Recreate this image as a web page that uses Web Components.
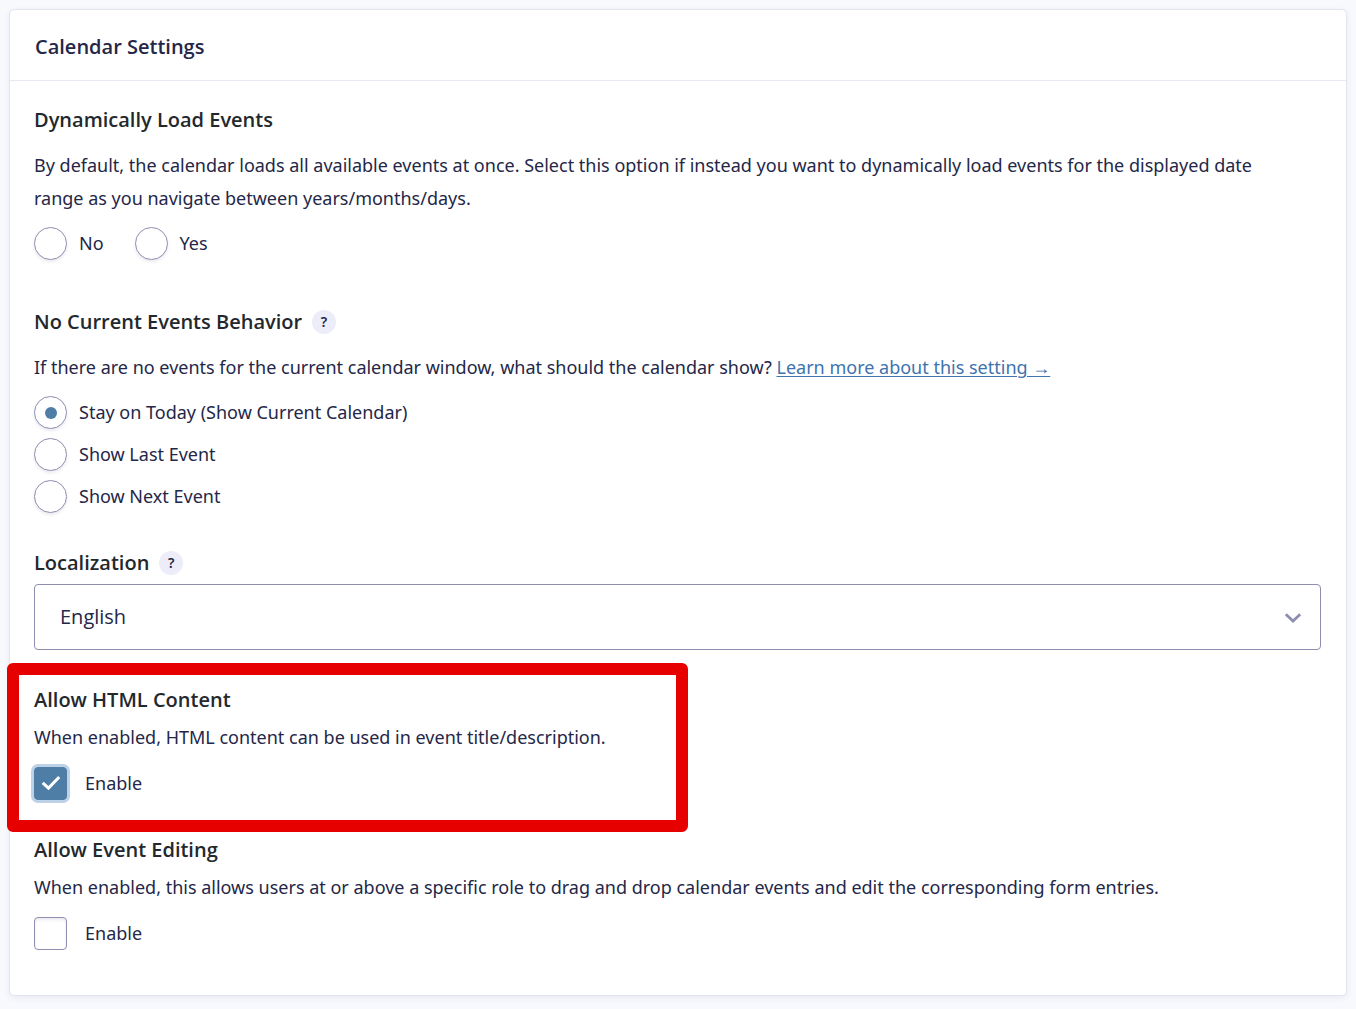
<!DOCTYPE html>
<html lang="en">
<head>
<meta charset="utf-8">
<title>Calendar Settings</title>
<style>
  body {
    margin: 0;
    padding: 9px;
    background: #f8f9fd;
    color: #242748;
    font: 400 18px/33px "Segoe UI", "Noto Sans", "Open Sans", sans-serif;
    --heading-font: "Segoe UI", "Open Sans", "Noto Sans", sans-serif;
    --heading: #23282d;
    --outline: #8e8eb0;
    --accent: #4e7da5;
    --link: #3e73ae;
    --callout: #e60000;
  }
</style>
</head>
<body>
<settings-card>
  <span slot="title">Calendar Settings</span>

  <setting-block class="roomy spaced">
    <span slot="heading">Dynamically Load Events</span>
    <span slot="description">By default, the calendar loads all available events at once. Select this option if instead you want to dynamically load events for the displayed date range as you navigate between years/months/days.</span>
    <choice-group type="radio" name="dynamic" label="Dynamically Load Events" options="No|Yes" inline></choice-group>
  </setting-block>

  <setting-block class="roomy">
    <span slot="heading">No Current Events Behavior</span>
    <help-tip slot="help"></help-tip>
    <span slot="description">If there are no events for the current calendar window, what should the calendar show? <text-link href="#learn">Learn more about this setting →</text-link></span>
    <choice-group type="radio" name="behavior" label="No Current Events Behavior" options="Stay on Today (Show Current Calendar)|Show Last Event|Show Next Event" value="Stay on Today (Show Current Calendar)"></choice-group>
  </setting-block>

  <select-field label="Localization" options="English"></select-field>

  <setting-block callout>
    <span slot="heading">Allow HTML Content</span>
    <span slot="description">When enabled, HTML content can be used in event title/description.</span>
    <choice-group type="checkbox" name="html" label="Allow HTML Content" options="Enable" value="Enable" focused></choice-group>
  </setting-block>

  <setting-block>
    <span slot="heading">Allow Event Editing</span>
    <span slot="description">When enabled, this allows users at or above a specific role to drag and drop calendar events and edit the corresponding form entries.</span>
    <choice-group type="checkbox" name="editing" label="Allow Event Editing" options="Enable"></choice-group>
  </setting-block>
</settings-card>

<script>
const define = (name, html, setup) => {
  const template = document.createElement('template');
  template.innerHTML = html;
  customElements.define(name, class extends HTMLElement {
    constructor() {
      super();
      this.attachShadow({ mode: 'open' }).append(template.content.cloneNode(true));
    }
    connectedCallback() {
      if (setup && !this.ready) { this.ready = true; setup(this, this.shadowRoot); }
    }
  });
};

define('settings-card', `
  <style>
    :host { display: block; background: #fff; border: 1px solid #e2e4ee; border-radius: 5px; box-shadow: 0 2px 6px rgba(58, 58, 120, .07); }
    header { padding: 22px 25px 18px; border-bottom: 1px solid #e8e8f0; }
    h2 { margin: 0; font: 600 20px/30px var(--heading-font); }
    .body { display: flex; flex-direction: column; padding: 24px 25px 45px 24px; }
    ::slotted(*) { margin-bottom: 35px; }
    ::slotted(.spaced) { margin-bottom: 47px; }
    ::slotted(:last-child) { margin-bottom: 0; }
  </style>
  <header><h2><slot name="title"></slot></h2></header>
  <div class="body"><slot></slot></div>
`);

define('setting-block', `
  <style>
    :host { display: block; position: relative; }
    .head { display: flex; align-items: center; gap: 10px; margin-bottom: 6px; }
    :host(.roomy) .head { margin-bottom: 14px; }
    h3 { margin: 0; color: var(--heading); font: 600 20px/30px var(--heading-font); }
    p { margin: 0 0 13px; padding-right: 32px; }
    :host(.roomy) p { margin-bottom: 12px; }
    .frame { display: none; }
    :host([callout]) .frame { display: block; position: absolute; inset: -22px auto -32px -27px; width: 681px; box-sizing: border-box; border: 12px solid var(--callout); border-radius: 6px; pointer-events: none; }
  </style>
  <div class="head"><h3><slot name="heading"></slot></h3><slot name="help"></slot></div>
  <p><slot name="description"></slot></p>
  <slot></slot>
  <div class="frame"></div>
`);

define('help-tip', `
  <style>
    :host { display: inline-flex; }
    button { width: 24px; height: 24px; padding: 0; border: 0; border-radius: 50%; background: #ecedf8; color: #242748; font: inherit; font-size: 14px; font-weight: 600; line-height: 24px; }
  </style>
  <button type="button" aria-label="Help">?</button>
`);

define('text-link', `
  <style>
    :host { display: inline; }
    a { color: var(--link); text-decoration: underline; text-decoration-thickness: 1px; text-underline-offset: 2px; }
  </style>
  <a><slot></slot></a>
`, (host, root) => { root.querySelector('a').href = host.getAttribute('href'); });

define('choice-group', `
  <style>
    :host { display: block; }
    .group { display: flex; flex-direction: column; align-items: flex-start; gap: 9px; }
    :host([inline]) .group { flex-direction: row; gap: 31px; }
    .choice { display: flex; align-items: center; gap: 12px; }
    input { appearance: none; display: grid; place-items: center; box-sizing: border-box; flex: none; width: 33px; height: 33px; margin: 0; border: 1px solid var(--outline); background: #fff; outline: 0; }
    input[type=radio] { border-radius: 50%; box-shadow: 0 2px 3px rgba(58, 58, 120, .1); }
    input[type=radio]:checked::before { content: ""; width: 12px; height: 12px; border-radius: 50%; background: var(--accent); }
    input[type=checkbox] { border-radius: 4px; box-shadow: inset 0 2px 3px rgba(58, 58, 120, .1); }
    .mark { display: none; }
    :host([type=checkbox]) .choice { gap: 18px; }
    .box { display: grid; }
    .box > * { grid-area: 1 / 1; }
    input[type=checkbox]:checked { background: var(--accent); border-color: var(--accent); }
    input[type=checkbox]:checked + .mark { display: block; pointer-events: none; }
    :host([focused]) input[type=checkbox] { box-shadow: 0 0 0 3px #bdd2e6; }
  </style>
  <div class="group"></div>
`, (host, root) => {
  const group = root.querySelector('.group');
  const type = host.getAttribute('type');
  group.setAttribute('role', type === 'radio' ? 'radiogroup' : 'group');
  group.setAttribute('aria-label', host.getAttribute('label'));
  host.getAttribute('options').split('|').forEach((text, i) => {
    const row = document.createElement('div');
    row.className = 'choice';
    row.innerHTML = `<span class="box"><input type="${type}" id="c${i}" name="${host.getAttribute('name')}">
      <svg class="mark" width="33" height="33" viewBox="0 0 33 33" fill="none" aria-hidden="true"><path d="M8.7 15.8l5.8 5.3L25.2 10" stroke="#fff" stroke-width="3"/></svg></span>
      <label for="c${i}"></label>`;
    row.querySelector('label').textContent = text;
    row.querySelector('input').checked = text === host.getAttribute('value');
    group.append(row);
  });
});

define('select-field', `
  <style>
    :host { display: block; }
    .head { display: flex; align-items: center; gap: 10px; margin-bottom: 6px; }
    label { color: var(--heading); font: 600 20px/30px var(--heading-font); }
    .control { display: grid; align-items: center; }
    .control > * { grid-area: 1 / 1; }
    select { appearance: none; box-sizing: border-box; width: 100%; height: 66px; margin: 0; padding: 0 60px 0 25px; border: 1px solid var(--outline); border-radius: 4px; background: #fff; color: #242748; font: 400 20px/30px var(--heading-font); }
    svg { justify-self: end; margin-right: 18px; pointer-events: none; }
  </style>
  <div class="head"><label for="field"></label><help-tip></help-tip></div>
  <div class="control">
    <select id="field"></select>
    <svg width="20" height="14" viewBox="0 0 20 14" fill="none" aria-hidden="true"><path d="M2.8 4.2l7.2 6.8 7.2-6.8" stroke="#8e8eb0" stroke-width="2.8"/></svg>
  </div>
`, (host, root) => {
  root.querySelector('label').textContent = host.getAttribute('label');
  host.getAttribute('options').split('|').forEach(text => root.querySelector('select').add(new Option(text)));
});
</script>
</body>
</html>
